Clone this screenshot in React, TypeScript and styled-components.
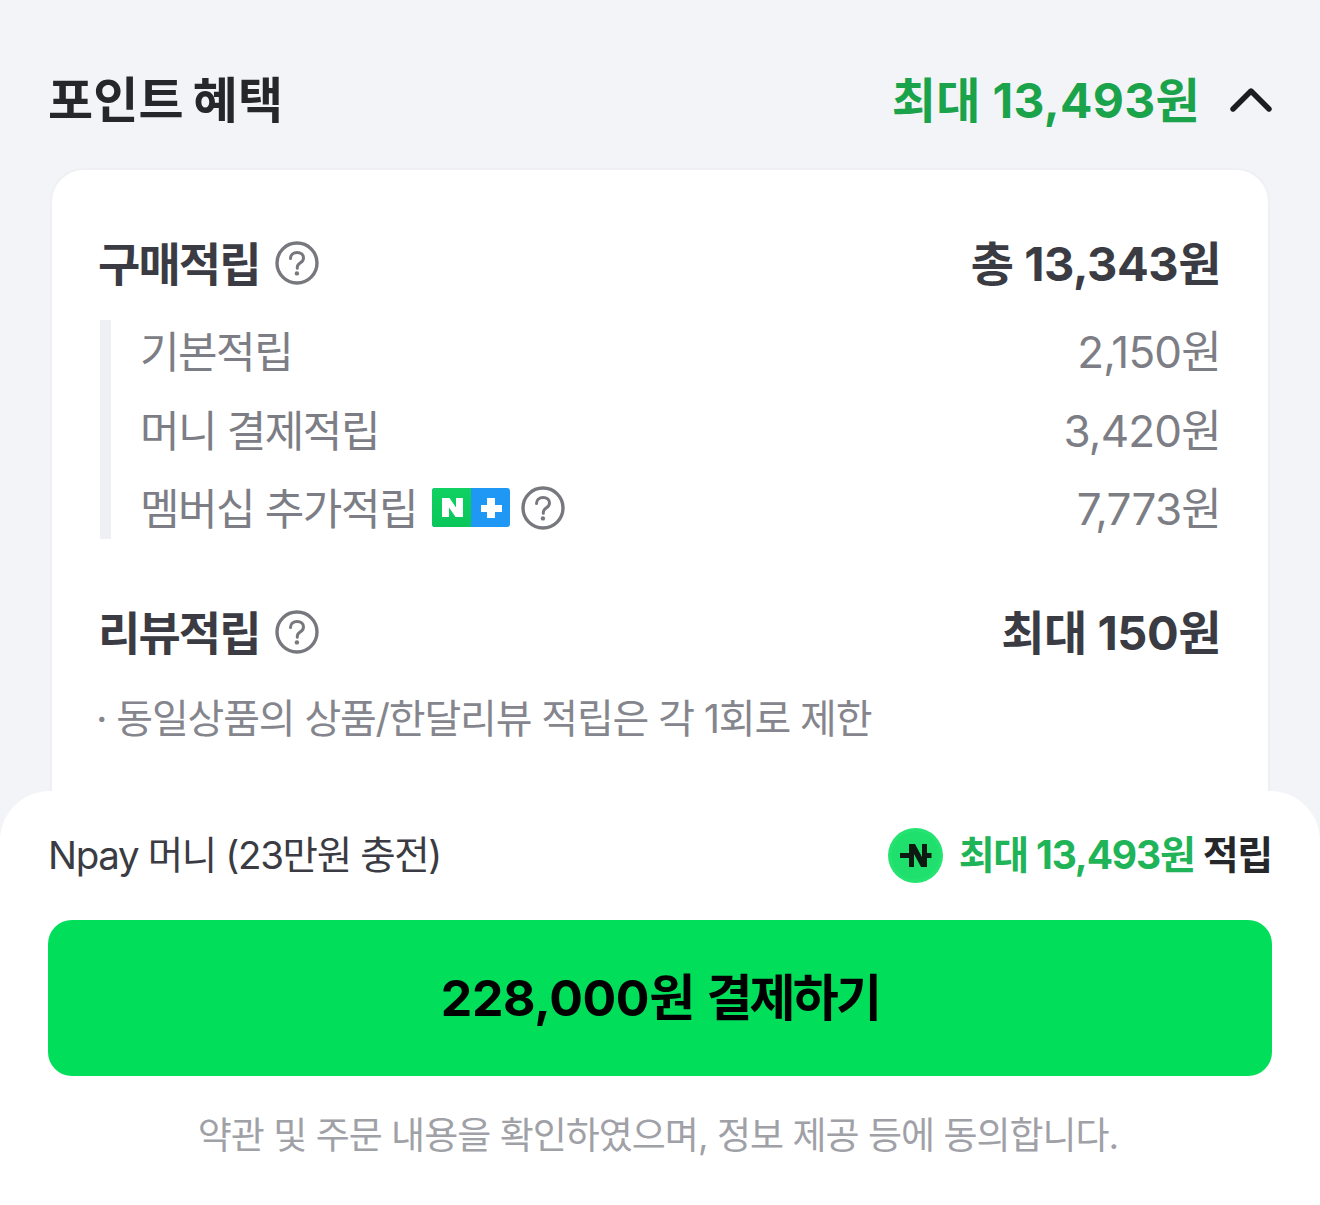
import React from "react";
import styled, { createGlobalStyle } from "styled-components";
import { ChevronUp } from "lucide-react";

const GlobalStyle = createGlobalStyle`
  html, body {
    margin: 0;
    padding: 0;
    background: #f3f4f7;
    font-family: Inter, "Noto Sans CJK KR", sans-serif;
  }
`;

const Page = styled.div`
  position: relative;
  width: 1320px;
  height: 1205px;
  overflow: hidden;
  background: #f3f4f7;
`;

const Header = styled.div`
  display: flex;
  justify-content: space-between;
  align-items: center;
  height: 60px;
  padding: 66px 33px 42px 48px;
`;

const Title = styled.div`
  font-size: 49px;
  font-weight: 700;
  letter-spacing: 0.2px;
  word-spacing: -3px;
  color: #26272b;
`;

const HeaderRight = styled.div`
  display: flex;
  align-items: center;
  gap: 15px;

  svg {
    margin-top: 8px;
  }
`;

const MaxAmount = styled.div`
  margin-top: 2px;
  font-size: 48px;
  font-weight: 700;
  letter-spacing: 0.3px;
  color: #1aa34a;
`;

const Card = styled.div`
  margin: 0 50px;
  height: 800px;
  padding: 63px 47px 0 46px;
  background: #fff;
  border: 2px solid #eff0f3;
  border-radius: 34px;
  box-sizing: border-box;
`;

const SectionRow = styled.div`
  display: flex;
  justify-content: space-between;
  align-items: center;
  height: 56px;
`;

const SectionLabel = styled.div`
  display: flex;
  align-items: center;
  gap: 15px;
  font-size: 46px;
  font-weight: 700;
  letter-spacing: -1.9px;
  color: #3b3c43;

  svg {
    margin-top: 4px;
  }
`;

const SectionValue = styled.div`
  margin-top: -2px;
  font-size: 47px;
  font-weight: 700;
  letter-spacing: -0.45px;
  color: #3b3c43;
`;

const SubList = styled.div`
  display: flex;
  flex-direction: column;
  gap: 16.5px;
  margin: 31px 0 63px 2px;
  padding-left: 29px;
  border-left: 11px solid #eef0f4;
`;

const SubRow = styled.div`
  display: flex;
  justify-content: space-between;
  align-items: center;
  height: 62px;
  padding-bottom: 4px;
  box-sizing: border-box;
  font-size: 43px;
  letter-spacing: -1.5px;
  color: #7d7e85;
`;

const SubAmount = styled.span`
  font-size: 44px;
  letter-spacing: -0.8px;
`;

const SubLabel = styled.div`
  display: flex;
  align-items: center;
  gap: 11px;

  svg {
    margin-top: 3px;
  }
`;

const Badge = styled.svg`
  margin-left: 4px;
`;

const Notice = styled.div`
  margin: 29px 0 0 -2px;
  font-size: 40px;
  letter-spacing: -1.2px;
  color: #85868d;
`;

const Sheet = styled.div`
  position: absolute;
  left: 0;
  right: 0;
  bottom: 0;
  height: 414px;
  padding: 0 48px;
  box-sizing: border-box;
  background: #fff;
  border-radius: 50px 50px 0 0;
`;

const PayRow = styled.div`
  display: flex;
  justify-content: space-between;
  align-items: center;
  height: 129px;
`;

const PayLabel = styled.div`
  margin-top: -8px;
  font-size: 38.5px;
  letter-spacing: -1.35px;
  color: #3b3c43;
`;

const PayReward = styled.div`
  display: flex;
  align-items: center;
  gap: 16px;
  font-size: 39px;
  font-weight: 700;
  letter-spacing: -1.2px;
  color: #26272b;
`;

const RewardText = styled.span`
  margin-top: -8px;
`;

const Accent = styled.span`
  color: #1fb457;
`;

const PayButton = styled.button`
  display: block;
  width: 100%;
  height: 156px;
  padding: 0 0 8px;
  border: none;
  border-radius: 24px;
  background: #00de5a;
  color: #000;
  font-family: inherit;
  font-size: 50px;
  font-weight: 700;
  letter-spacing: -0.35px;
`;

const ButtonWord = styled.span`
  letter-spacing: -2.8px;
`;

const Terms = styled.div`
  margin-top: 30px;
  padding-right: 4px;
  text-align: center;
  font-size: 37px;
  letter-spacing: -1px;
  color: #a0a1a7;
`;

function HelpIcon() {
  return (
    <svg width="44" height="44" viewBox="0 0 44 44" fill="none">
      <circle cx="22" cy="22" r="20" stroke="#77787e" strokeWidth="3.4" />
      <path
        d="M15.5 17.5c0-3.800 2.800-6 6.600-6 3.700 0 6.400 2.200 6.400 5.400 0 2.600-1.500 3.900-3.400 5.200-1.900 1.300-2.800 2.300-2.800 4.400v.8"
        stroke="#77787e"
        strokeWidth="3"
        strokeLinecap="round"
      />
      <circle cx="21.900" cy="32.400" r="2.200" fill="#77787e" />
    </svg>
  );
}

function NPlusBadge() {
  return (
    <Badge width="78" height="39" viewBox="0 0 78 39">
      <defs>
        <linearGradient id="nGreen" x1="0" y1="0" x2="0" y2="1">
          <stop offset="0" stopColor="#10d162" />
          <stop offset="1" stopColor="#0ac65a" />
        </linearGradient>
      </defs>
      <rect width="78" height="39" rx="3" fill="#1f97f5" />
      <path d="M3 0h36v39H3a3 3 0 0 1-3-3V3a3 3 0 0 1 3-3z" fill="url(#nGreen)" />
      <path d="M10 10h7.500l6.500 9.500V10h7v19h-7.400L17 19.500V29h-7z" fill="#fff" />
      <path d="M55 10h8v7h7v7h-7v6h-8v-6h-6v-7h6z" fill="#fff" />
    </Badge>
  );
}

function NpayCoin() {
  return (
    <svg width="55" height="55" viewBox="0 0 55 55">
      <circle cx="27.500" cy="27.500" r="27.500" fill="#25e371" />
      <circle cx="27.500" cy="27.500" r="24" fill="#1fe06c" />
      <path d="M21 16h6l7 13V16h5v23h-6l-7-13v13h-5z" fill="#0d1a12" />
      <path d="M12 25h9v5h-9zM39 25h4.500v5H39z" fill="#0d1a12" />
    </svg>
  );
}

export default function App() {
  return (
    <Page>
      <GlobalStyle />
      <Header>
        <Title>포인트 혜택</Title>
        <HeaderRight>
          <MaxAmount>최대 13,493원</MaxAmount>
          <ChevronUp size={72} strokeWidth={1.8} color="#1c1d20" />
        </HeaderRight>
      </Header>
      <Card>
        <SectionRow>
          <SectionLabel>
            구매적립
            <HelpIcon />
          </SectionLabel>
          <SectionValue>총 13,343원</SectionValue>
        </SectionRow>
        <SubList>
          <SubRow>
            <span>기본적립</span>
            <SubAmount>2,150원</SubAmount>
          </SubRow>
          <SubRow>
            <span>머니 결제적립</span>
            <SubAmount>3,420원</SubAmount>
          </SubRow>
          <SubRow>
            <SubLabel>
              멤버십 추가적립
              <NPlusBadge />
              <HelpIcon />
            </SubLabel>
            <SubAmount>7,773원</SubAmount>
          </SubRow>
        </SubList>
        <SectionRow>
          <SectionLabel>
            리뷰적립
            <HelpIcon />
          </SectionLabel>
          <SectionValue>최대 150원</SectionValue>
        </SectionRow>
        <Notice>· 동일상품의 상품/한달리뷰 적립은 각 1회로 제한</Notice>
      </Card>
      <Sheet>
        <PayRow>
          <PayLabel>Npay 머니 (23만원 충전)</PayLabel>
          <PayReward>
            <NpayCoin />
            <RewardText>
              <Accent>최대 13,493원</Accent> 적립
            </RewardText>
          </PayReward>
        </PayRow>
        <PayButton>
          228,000원 <ButtonWord>결제하기</ButtonWord>
        </PayButton>
        <Terms>약관 및 주문 내용을 확인하였으며, 정보 제공 등에 동의합니다.</Terms>
      </Sheet>
    </Page>
  );
}
